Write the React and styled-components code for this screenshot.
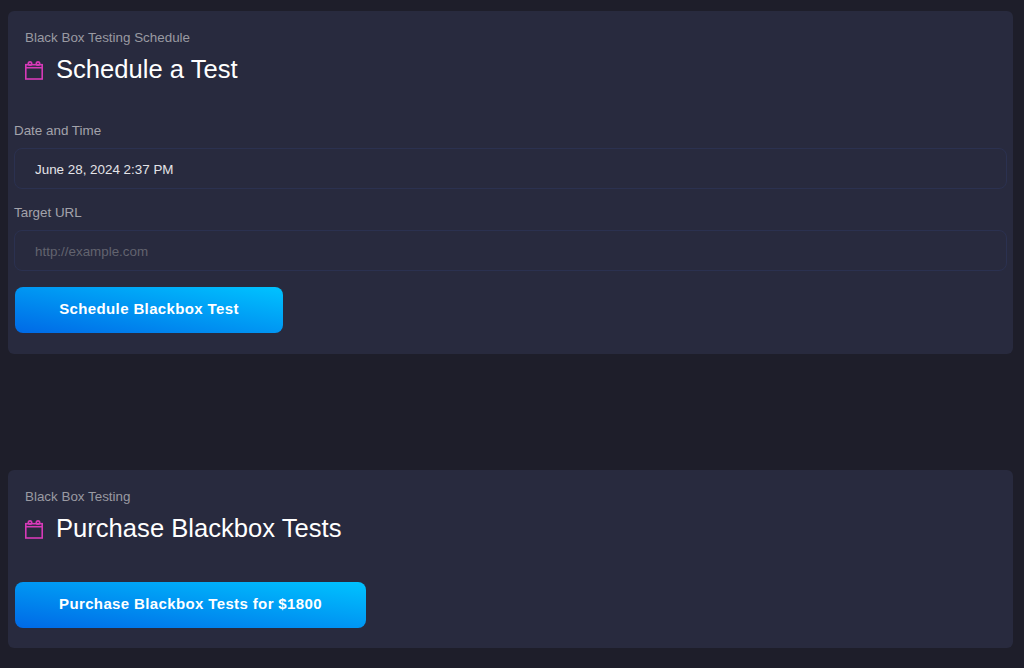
import React from 'react';
import styled, { createGlobalStyle } from 'styled-components';

const GlobalStyle = createGlobalStyle`
    * {
        box-sizing: border-box;
    }
    body {
        margin: 0;
        background: #1e1e2a;
        font-family: "Liberation Sans", Arial, sans-serif;
    }
`

const Page = styled.div`
    padding: 11px 11px 20px 8px;
`

const Card = styled.section`
    background: #282a3e;
    border-radius: 6px;
    padding: 0 6px ${props => props.$bottom}px;
    margin-bottom: ${props => props.$gap || 0}px;
`

const CardHeader = styled.header`
    padding: 19px 11px 0;
    height: 112px;
`

const Eyebrow = styled.p`
    margin: 0 0 9px;
    color: #9a9aa2;
    font-size: 13.4px;
    line-height: 15px;
`

const TitleRow = styled.div`
    display: flex;
    align-items: flex-start;
    gap: 13px;
`

const Title = styled.h2`
    margin: 0;
    color: #fff;
    font-size: 25.6px;
    font-weight: 400;
    line-height: 30px;
`

const Field = styled.div`
    margin-bottom: 16px;
`

const Label = styled.label`
    display: block;
    margin-bottom: 10px;
    color: #a3a3ab;
    font-size: 13.4px;
    line-height: 15px;
`

const Input = styled.input`
    display: block;
    width: 100%;
    height: 41px;
    padding: 1px 20px 0;
    background: transparent;
    border: 1px solid #2b3150;
    border-radius: 8px;
    color: #e4e4e8;
    font-family: inherit;
    font-size: 13.4px;
    outline: none;

    &::placeholder {
        color: #62636f;
        opacity: 1;
    }
`

const Button = styled.button`
    display: block;
    width: ${props => props.$width}px;
    height: 46px;
    margin-left: 1px;
    padding: 0 0 3px;
    background: linear-gradient(to top right, #0069e6, #00c3ff);
    border: 0;
    border-radius: 8px;
    color: #fff;
    font-family: inherit;
    font-size: 15px;
    font-weight: 700;
    letter-spacing: 0.37px;
`

const IconSvg = styled.svg`
    flex: none;
    margin-top: 6px;
`

const CalendarIcon = () => (
    <IconSvg width="18" height="20" viewBox="0 0 18 20" fill="none" stroke="#d63ab8" strokeWidth="1.6">
        <rect x="0.8" y="4.7" width="16.4" height="14.3" />
        <line x1="0.8" y1="7.7" x2="17.2" y2="7.7" />
        <circle cx="5" cy="3.6" r="1.7" />
        <circle cx="13" cy="3.6" r="1.7" />
    </IconSvg>
)

const App = () => (
    <Page>
        <GlobalStyle />
        <Card $bottom={21} $gap={116}>
            <CardHeader>
                <Eyebrow>Black Box Testing Schedule</Eyebrow>
                <TitleRow>
                    <CalendarIcon />
                    <Title>Schedule a Test</Title>
                </TitleRow>
            </CardHeader>
            <Field>
                <Label>Date and Time</Label>
                <Input defaultValue="June 28, 2024 2:37 PM" />
            </Field>
            <Field>
                <Label>Target URL</Label>
                <Input placeholder="http://example.com" />
            </Field>
            <Button $width={268}>Schedule Blackbox Test</Button>
        </Card>
        <Card $bottom={20}>
            <CardHeader>
                <Eyebrow>Black Box Testing</Eyebrow>
                <TitleRow>
                    <CalendarIcon />
                    <Title>Purchase Blackbox Tests</Title>
                </TitleRow>
            </CardHeader>
            <Button $width={351}>Purchase Blackbox Tests for $1800</Button>
        </Card>
    </Page>
)

export default App;
